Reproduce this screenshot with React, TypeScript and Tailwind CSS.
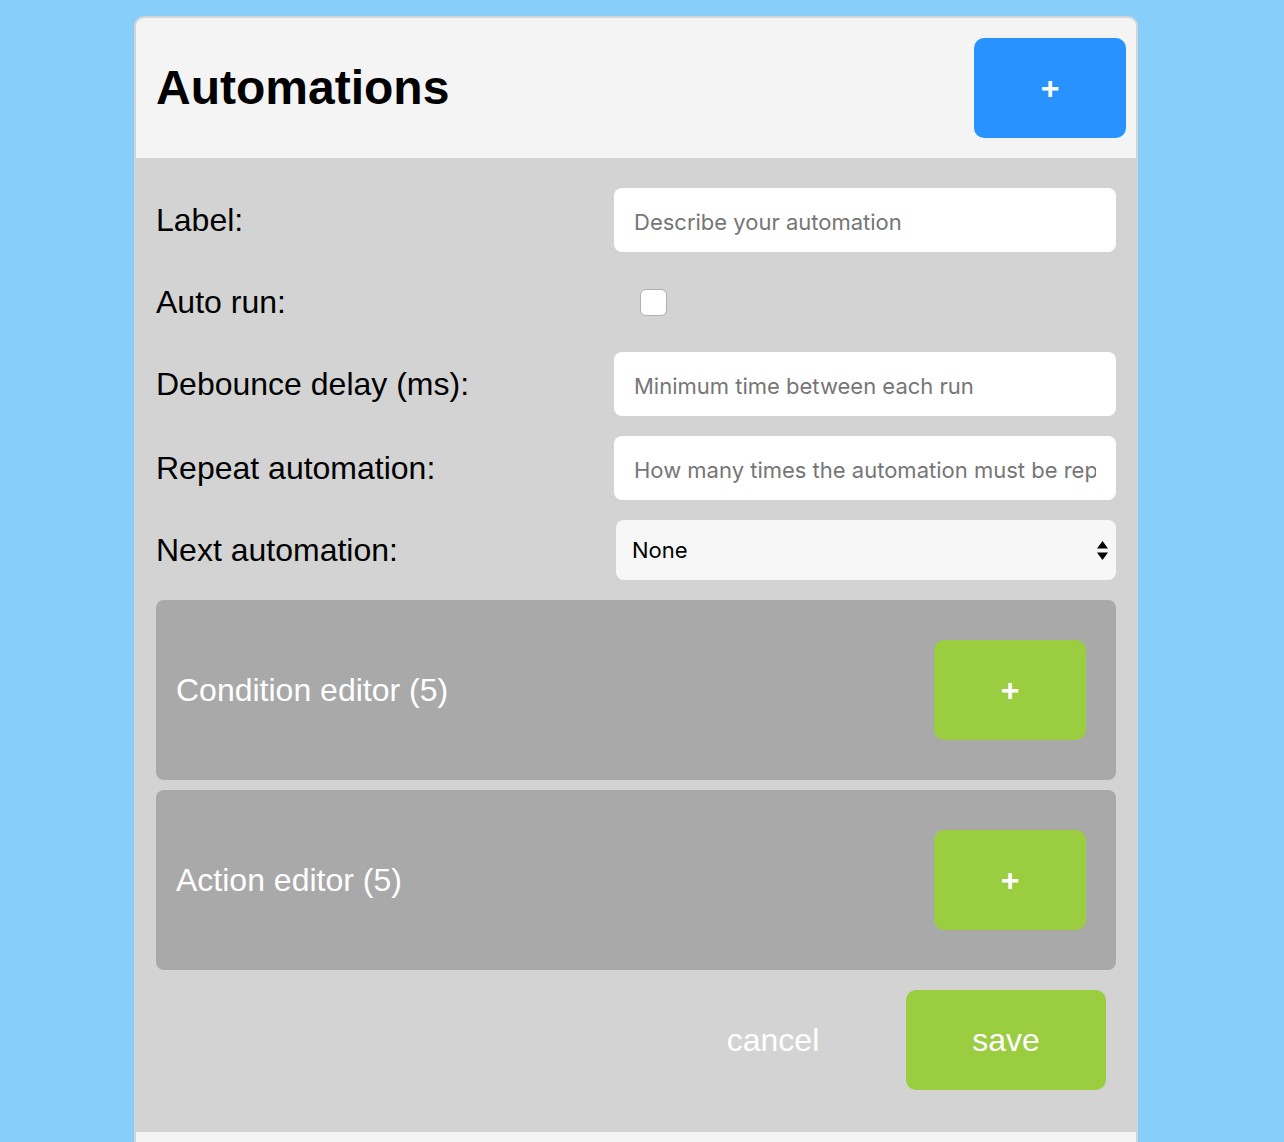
import React from "react";

const font = { fontFamily: '"Liberation Sans", Arial, sans-serif' };

const inputClass =
  "h-16 w-full rounded-lg bg-white px-5 pt-[3px] text-[22px] text-black placeholder:text-[#767676] outline-none font-['Inter',sans-serif]";

const FieldRow: React.FC<{ label: string; children: React.ReactNode; rowClass?: string }> = ({
  label,
  children,
  rowClass = "",
}) => (
  <div className={`grid grid-cols-[458px_502px] items-center ${rowClass}`}>
    <label className="text-[32px] leading-none text-black">{label}</label>
    <div>{children}</div>
  </div>
);

const EditorPanel: React.FC<{ title: string }> = ({ title }) => (
  <div className="flex h-[180px] items-center justify-between rounded-lg bg-[#a9a9a9] pl-5 pr-[30px]">
    <span className="text-[32px] text-white">{title}</span>
    <button className="flex h-[100px] w-[152px] items-center justify-center rounded-[10px] bg-[#9acd40] text-[32px] font-bold text-white">
      +
    </button>
  </div>
);

export default function App() {
  return (
    <div className="min-h-[1142px] bg-[#87cefa] pt-4" style={font}>
      <div className="ml-[134px] w-[1004px] overflow-hidden rounded-t-[10px] border-2 border-b-0 border-[#d4d4d4]">
        <div className="flex h-[140px] items-center justify-between bg-[#f4f4f4] pl-5 pr-[10px]">
          <h1 className="text-[48px] font-bold leading-none text-black">Automations</h1>
          <button className="flex h-[100px] w-[152px] items-center justify-center rounded-[10px] bg-[#2893ff] text-[32px] font-bold text-white">
            +
          </button>
        </div>

        <div className="bg-[#d3d3d3] px-5 pb-[42px] pt-[30px]">
          <div className="flex flex-col gap-5">
            <FieldRow label="Label:">
              <input className={inputClass} placeholder="Describe your automation" />
            </FieldRow>
            <FieldRow label="Auto run:" rowClass="h-[60px]">
              <span className="ml-[26px] block h-[27px] w-[27px] rounded-[6px] border border-[#b0b0b0] bg-white" />
            </FieldRow>
            <FieldRow label="Debounce delay (ms):">
              <input className={inputClass} placeholder="Minimum time between each run" />
            </FieldRow>
            <FieldRow label="Repeat automation:">
              <input
                className={inputClass}
                placeholder="How many times the automation must be repeated"
              />
            </FieldRow>
            <FieldRow label="Next automation:">
              <div className="relative ml-[2px] flex h-[60px] w-[500px] items-center rounded-lg bg-[#f7f7f7] px-4">
                <span className="text-[22px] text-black font-['Inter',sans-serif]">None</span>
                <svg
                  className="absolute right-[8px] top-[21px]"
                  width="11"
                  height="19"
                  viewBox="0 0 11 19"
                >
                  <path d="M5.5 0 L11 7.5 L0 7.5 Z" fill="#000" />
                  <path d="M0 11.5 L11 11.5 L5.5 19 Z" fill="#000" />
                </svg>
              </div>
            </FieldRow>
          </div>

          <div className="mt-5 flex flex-col gap-[10px]">
            <EditorPanel title="Condition editor (5)" />
            <EditorPanel title="Action editor (5)" />
          </div>

          <div className="mt-5 flex justify-end pr-[10px]">
            <button className="mr-[33px] h-[100px] w-[200px] text-[32px] text-white">cancel</button>
            <button className="h-[100px] w-[200px] rounded-[10px] bg-[#9acd40] text-[32px] text-white">
              save
            </button>
          </div>
        </div>

        <div className="h-[40px] bg-[#f4f4f4]" />
      </div>
    </div>
  );
}
